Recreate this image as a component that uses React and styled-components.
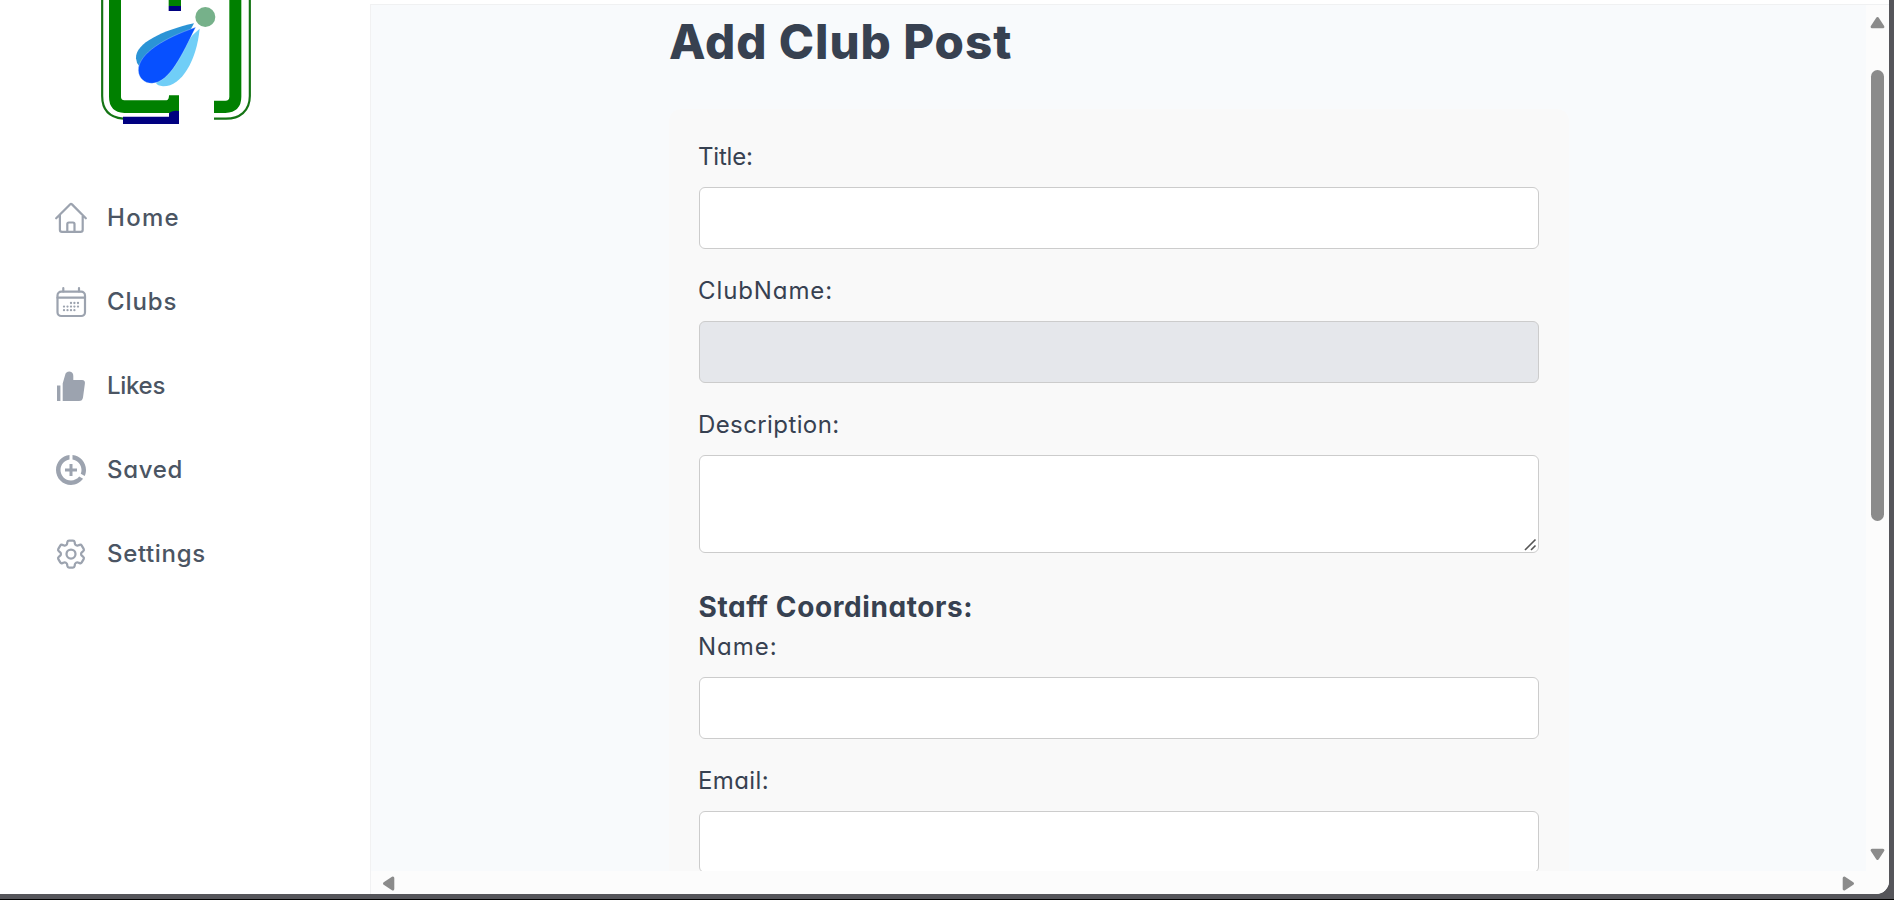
import React from 'react';
import styled, { createGlobalStyle } from 'styled-components';
import { HiOutlineCog6Tooth } from 'react-icons/hi2';

const GlobalStyle = createGlobalStyle`
  *, *::before, *::after { box-sizing: border-box; }
  body {
    margin: 0;
    overflow: hidden;
    background: #000;
    color: #374151;
    font-family: Inter, 'Open Sans', sans-serif;
    font-feature-settings: 'cv11';
  }
  h1, h2 { margin: 0; }
`;

const Desktop = styled.div`
  width: 1894px;
  height: 899px;
  padding: 0 5px 5px 0;
  background: #55555a;
`;

const Window = styled.div`
  display: flex;
  width: 1889px;
  height: 894px;
  overflow: hidden;
  background: #fff;
  border-radius: 0 0 13px 0;
`;

const Sidebar = styled.aside`
  flex: none;
  display: flex;
  flex-direction: column;
  width: 370px;
  height: 100%;
`;

const LogoArt = styled.svg`
  flex: none;
  display: block;
  width: 152px;
  height: 125px;
  margin-left: 100px;
`;

const Nav = styled.nav`
  display: flex;
  flex-direction: column;
  gap: 36px;
  padding: 69px 0 0 53px;
`;

const NavLink = styled.a`
  display: flex;
  align-items: center;
  gap: 18px;
  height: 48px;
  color: #4b5563;
  font-size: 24px;
  font-weight: 500;
  line-height: 36px;
  letter-spacing: ${(p) => p.$tracking}px;
`;

const IconBox = styled.span`
  display: flex;
  align-items: center;
  justify-content: center;
  width: 36px;
  height: 36px;
  color: #9ca3af;
`;

const Main = styled.main`
  flex: 1;
  display: grid;
  grid-template-columns: 1fr 23px;
  grid-template-rows: 1fr 23px;
  height: 890px;
  margin-top: 4px;
  border-top: 1px solid #f0f1f2;
  border-left: 1px solid #f1f1f2;
  background: #fcfcfc;
`;

const Viewport = styled.section`
  min-height: 0;
  overflow: hidden;
  padding: 1px 0 0 298px;
  background: #f8fafc;
`;

const PageTitle = styled.h1`
  height: 103px;
  font-size: 47.5px;
  font-weight: 800;
  line-height: 72px;
  letter-spacing: 0.95px;
`;

const Form = styled.form`
  width: 900px;
  padding: 30px;
  background: #f9f9f9;
  border-radius: 12px;
`;

const Field = styled.label`
  display: block;
  margin-bottom: ${(p) => p.$gap ?? 24}px;
`;

const FieldName = styled.span`
  display: block;
  margin: 0 0 12px -1px;
  font-size: 24px;
  line-height: 36px;
  letter-spacing: ${(p) => p.$tracking}px;
`;

const Input = styled.input`
  display: block;
  width: 840px;
  height: 62px;
  padding: 12px;
  border: 1px solid #ccc;
  border-radius: 6px;
  outline: none;
  background: #fff;
  font: inherit;
  &:disabled { background: #e5e7eb; }
`;

const TextAreaWrap = styled.span`
  display: block;
  position: relative;
  width: 840px;
  height: 98px;
`;

const TextArea = styled.textarea`
  display: block;
  width: 100%;
  height: 100%;
  padding: 12px;
  border: 1px solid #ccc;
  border-radius: 6px;
  outline: none;
  background: #fff;
  resize: none;
  font: inherit;
`;

const Grip = styled.svg`
  position: absolute;
  right: 2px;
  bottom: 2px;
`;

const SectionTitle = styled.h2`
  margin: -1px 0 1px -0.5px;
  font-size: 28px;
  font-weight: 700;
  line-height: 42px;
  letter-spacing: 0.6px;
`;

const VerticalBar = styled.div`
  display: flex;
  flex-direction: column;
  align-items: center;
  padding: 10px 1px 9px 0;
`;

const HorizontalBar = styled.div`
  display: flex;
  align-items: center;
  justify-content: space-between;
  padding: 1px 10px 0;
`;

const Thumb = styled.div`
  width: 13px;
  height: 451px;
  margin-top: 40px;
  margin-bottom: auto;
  border-radius: 7px;
  background: #8b8b8b;
`;

const ArrowSvg = styled.svg`
  flex: none;
  display: block;
  transform: rotate(${(p) => p.$turn}deg);
`;

const Arrow = ({ turn }) => (
  <ArrowSvg $turn={turn} width="15" height="15" viewBox="0 0 15 15" fill="#8b8b8b" stroke="#8b8b8b" strokeWidth="3" strokeLinejoin="round">
    <path d="M7.5 3.500 12.900 11.800H2.100Z" />
  </ArrowSvg>
);

const Logo = () => (
  <LogoArt viewBox="60 0 456 375">
    <path d="M66.500 0V288Q66.500 350 129 356M509.500 0V288C509.500 334 478 356 438 356H402" fill="none" stroke="#147414" strokeWidth="6.500" />
    <path d="M87 0H123V292Q124 301 133 301H260Q267 300 267 286H297V339H133Q87 336 87 290Z" fill="#008000" />
    <path d="M484 0H448V290Q448 302 436 302H402V339H436Q484 336 484 290Z" fill="#008000" />
    <path d="M266 0H303V18H266Z" fill="#008000" />
    <path d="M266 18H303V33H266ZM129 350H267V340Q276 330 297 333V372H129Z" fill="#000080" />
    <path d="M342 70C250 90 165 130 168 175Q169 190 178 199L330 92Z" fill="#2b94d6" />
    <path d="M359 86C350 180 305 260 249 259Q232 257 228 249L338 105Z" fill="#70cef7" />
    <path d="M347 82C255 113 175 160 175 211C176 236 194 250 216 250C270 247 306 164 347 82Z" fill="#0750ff" stroke="#d5eef8" strokeWidth="1" />
    <circle cx="376" cy="51" r="30" fill="#76b18a" />
  </LogoArt>
);

const HomeIcon = () => (
  <svg width="32" height="32" viewBox="0 0 32 32" fill="none" stroke="currentColor" strokeWidth="2.200" strokeLinecap="round" strokeLinejoin="round">
    <path d="M1.200 16.300 15 2.400Q16 1.400 17 2.400L30.800 16.300M4.900 13V27.800Q4.900 29.900 7 29.900H25.600Q27.700 29.900 27.700 27.800V13M12.300 29.500V22Q12.300 20.500 13.800 20.500H18Q19.500 20.500 19.500 22V29.500" />
  </svg>
);

const dots = [
  [16, 17], [19.4, 17], [23, 17],
  [9, 20.6], [12.5, 20.6], [16, 20.6], [19.4, 20.6], [23, 20.6],
  [9, 24.2], [12.5, 24.2], [16, 24.2], [19.4, 24.2],
];

const CalendarIcon = () => (
  <svg width="32" height="32" viewBox="0 0 32 32" fill="none" stroke="currentColor" strokeWidth="2.200" strokeLinecap="round">
    <rect x="2.500" y="5.700" width="27.500" height="24.300" rx="3.800" />
    <path d="M2.500 11.700H30M8.300 2.200V5.500M24 2.200V5.500" />
    {dots.map(([x, y]) => (
      <circle key={`${x}-${y}`} cx={x} cy={y} r="1.15" fill="currentColor" stroke="none" />
    ))}
  </svg>
);

const LikeIcon = () => (
  <svg width="32" height="32" viewBox="0 0 32 32" fill="currentColor">
    <path d="M2 15.500H5.400V31H2Z" />
    <path d="M7.700 13.500 10 5.500C10.600 2.500 12 1.500 14.500 1.500C17.300 1.700 18.300 3.600 18.300 6V10H27C29.300 10.100 30.200 11.500 29.900 13.500L28 27.500C27.500 30 26.500 31 24 31H7.700Z" />
  </svg>
);

const SavedIcon = () => (
  <svg width="36" height="36" viewBox="0 0 24 24" fill="currentColor">
    <path d="M11 8v3H8v2h3v3h2v-3h3v-2h-3V8h-2z" />
    <path d="M13 2.050v3.030c3.390.490 6 3.390 6 6.920 0 .900-.180 1.750-.480 2.540l2.600 1.530c.560-1.240.880-2.620.880-4.070 0-5.180-3.950-9.450-9-9.950zM12 19c-3.870 0-7-3.130-7-7 0-3.530 2.610-6.430 6-6.920V2.050c-5.060.500-9 4.760-9 9.950 0 5.520 4.470 10 9.990 10 3.310 0 6.240-1.610 8.060-4.090l-2.600-1.530C16.170 17.980 14.210 19 12 19z" />
  </svg>
);

const SettingsIcon = () => <HiOutlineCog6Tooth size={36} strokeWidth={1.5} />;

const links = [
  { text: 'Home', icon: HomeIcon, tracking: 1.3 },
  { text: 'Clubs', icon: CalendarIcon, tracking: 0.9 },
  { text: 'Likes', icon: LikeIcon, tracking: -0.3 },
  { text: 'Saved', icon: SavedIcon, tracking: 0.7 },
  { text: 'Settings', icon: SettingsIcon, tracking: 0.65 },
];

export default function App() {
  return (
    <>
      <GlobalStyle />
      <Desktop>
        <Window>
          <Sidebar>
            <Logo />
            <Nav>
              {links.map(({ text, icon: Icon, tracking }) => (
                <NavLink key={text} $tracking={tracking}>
                  <IconBox><Icon /></IconBox>
                  {text}
                </NavLink>
              ))}
            </Nav>
          </Sidebar>
          <Main>
            <Viewport>
              <PageTitle>Add Club Post</PageTitle>
              <Form>
                <Field>
                  <FieldName $tracking={-0.2}>Title:</FieldName>
                  <Input type="text" />
                </Field>
                <Field>
                  <FieldName $tracking={0.9}>ClubName:</FieldName>
                  <Input type="text" disabled />
                </Field>
                <Field $gap={34}>
                  <FieldName $tracking={0.4}>Description:</FieldName>
                  <TextAreaWrap>
                    <TextArea />
                    <Grip width="13" height="13" viewBox="0 0 13 13" fill="none" stroke="#555" strokeWidth="1.600">
                      <path d="M1 12 11.500 1.500M7 12 11.500 7.500" />
                    </Grip>
                  </TextAreaWrap>
                </Field>
                <SectionTitle>Staff Coordinators:</SectionTitle>
                <Field>
                  <FieldName $tracking={1}>Name:</FieldName>
                  <Input type="text" />
                </Field>
                <Field>
                  <FieldName $tracking={0.4}>Email:</FieldName>
                  <Input type="email" />
                </Field>
              </Form>
            </Viewport>
            <VerticalBar>
              <Arrow turn={0} />
              <Thumb />
              <Arrow turn={180} />
            </VerticalBar>
            <HorizontalBar>
              <Arrow turn={-90} />
              <Arrow turn={90} />
            </HorizontalBar>
          </Main>
        </Window>
      </Desktop>
    </>
  );
}
